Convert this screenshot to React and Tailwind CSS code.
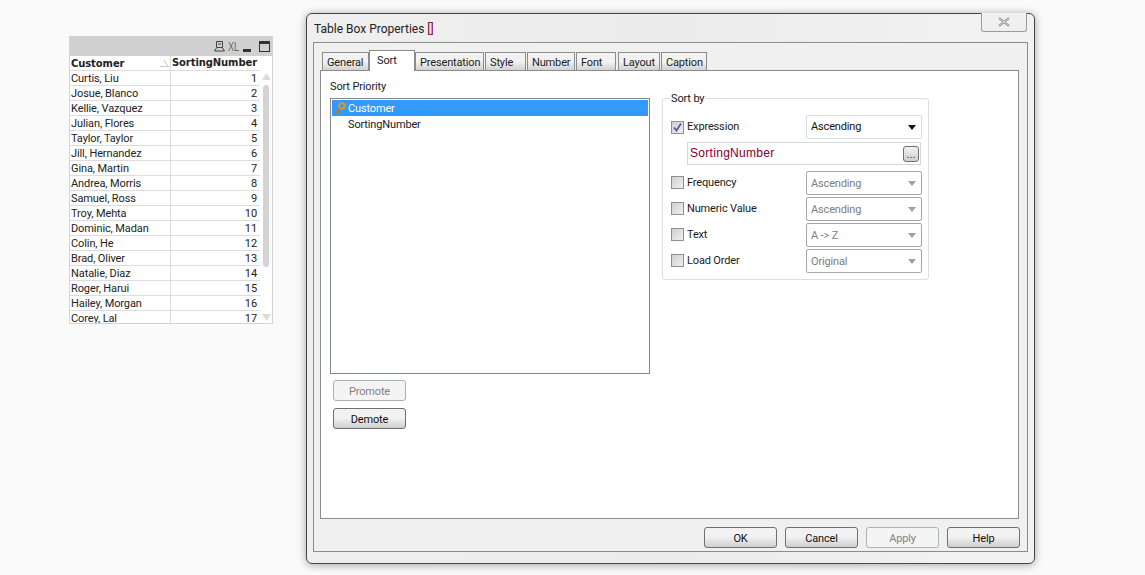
import React from 'react';

const rows = [
  'Curtis, Liu', 'Josue, Blanco', 'Kellie, Vazquez', 'Julian, Flores', 'Taylor, Taylor', 'Jill, Hernandez',
  'Gina, Martin', 'Andrea, Morris', 'Samuel, Ross', 'Troy, Mehta', 'Dominic, Madan', 'Colin, He',
  'Brad, Oliver', 'Natalie, Diaz', 'Roger, Harui', 'Hailey, Morgan', 'Corey, Lal',
];

const tabs = [
  { label: 'General', width: 'w-[47px]', ml: 'ml-0' },
  { label: 'Sort', width: 'w-[46px]', ml: 'ml-0', active: true },
  { label: 'Presentation', width: 'w-[69px]', ml: 'ml-0' },
  { label: 'Style', width: 'w-[41px]', ml: 'ml-px' },
  { label: 'Number', width: 'w-[48px]', ml: 'ml-px' },
  { label: 'Font', width: 'w-[40px]', ml: 'ml-px' },
  { label: 'Layout', width: 'w-[42px]', ml: 'ml-0.5' },
  { label: 'Caption', width: 'w-[46px]', ml: 'ml-px' },
];

const options = [
  { label: 'Frequency', value: 'Ascending' },
  { label: 'Numeric Value', value: 'Ascending' },
  { label: 'Text', value: 'A -> Z' },
  { label: 'Load Order', value: 'Original' },
];

const Checkbox = ({ checked }) => (
  <span className="w-[13px] h-[13px] border border-[#8e8f8f] bg-gradient-to-br from-[#cfcfcf] to-[#f0f0f0] flex items-center justify-center shrink-0">
    {checked && (
      <svg width="11" height="11" viewBox="0 0 11 11">
        <path d="M2 5.5 L4.5 8.5 L9 1.5" fill="none" stroke="#4a5f97" strokeWidth="1.8" />
      </svg>
    )}
  </span>
);

const Caret = ({ color }) => (
  <svg width="8" height="5" viewBox="0 0 8 5" className="shrink-0">
    <path d="M0 0 H8 L4 5 Z" fill={color} />
  </svg>
);

const Button = ({ label, disabled, width = 'w-[73px]' }) => (
  <button
    className={
      disabled
        ? `${width} h-[21px] pt-px rounded-[3px] border border-[#adb2b5] bg-[#f4f4f4] text-[#838383] leading-none`
        : `${width} h-[21px] pt-px rounded-[3px] border border-[#707070] bg-gradient-to-b from-[#f2f2f2] from-45% to-[#cfcfcf] text-[#111] leading-none`
    }
  >
    {label}
  </button>
);

const KeyIcon = () => (
  <svg width="12" height="13" viewBox="0 0 12 13" className="shrink-0">
    <circle cx="8" cy="4" r="2.8" fill="none" stroke="#d8982a" strokeWidth="2" />
    <path d="M6 6 L1.5 11 M3 10 L4.5 11.5" fill="none" stroke="#b87a1c" strokeWidth="1.8" />
  </svg>
);

const TableBox = () => (
  <div className="w-[204px] h-[288px] mt-9 bg-white border-r border-b border-l border-[#d4d4d4] flex flex-col overflow-hidden font-['Roboto',sans-serif] text-[11px] tracking-[-0.1px] text-[#222] shrink-0">
    <div className="h-5 bg-[#d0d0d0] flex items-center justify-end pr-[2px] text-[#444] shrink-0">
      <svg width="11" height="11" viewBox="0 0 11 11" className="mr-[3px]">
        <path d="M2.5 0.5 H8.5 V6.5 H2.5 Z M0.5 10 H10.5 M2.5 7 L0.5 10 M8.5 7 L10.5 10 M4 3 H7" fill="none" stroke="#444" />
      </svg>
      <span className="w-[11px] mr-[4px] flex justify-center text-[13px] leading-none text-[#666] font-['Liberation_Sans',sans-serif] scale-x-[0.7]">XL</span>
      <span className="w-2 h-[3px] bg-[#333] self-end mb-[4px] mr-[8px]" />
      <span className="w-[11px] h-[11px] border border-[#333] border-t-[3px]" />
    </div>
    <div className="flex flex-1 min-h-0">
      <div className="w-[190px]">
        <div className="flex h-[15px] font-['DejaVu_Sans',sans-serif] font-bold text-[10px] tracking-[-0.1px] border-b border-[#dcdcdc] leading-[13px]">
          <div className="w-[101px] pl-px border-r border-[#dcdcdc] flex justify-between items-center pr-px">
            <span>Customer</span>
            <svg width="9" height="8" viewBox="0 0 9 8"><path d="M0 7.5 H9 M8 7 L4 1" fill="none" stroke="#c8c8c8" /></svg>
          </div>
          <div className="flex-1 pl-px">SortingNumber</div>
        </div>
        {rows.map((name, i) => (
          <div key={name} className="flex h-[15px] pt-px border-b border-[#dcdcdc] leading-[14px]">
            <div className="w-[101px] -mt-px pt-px pl-px border-r border-[#dcdcdc] whitespace-nowrap">{name}</div>
            <div className="flex-1 text-right pr-[3px]">{i + 1}</div>
          </div>
        ))}
      </div>
      <div className="flex-1 flex flex-col items-center pt-[17px]">
        <svg width="9" height="7" viewBox="0 0 9 7"><path d="M4.5 0 L9 7 H0 Z" fill="#dcdcdc" /></svg>
        <div className="w-[6px] h-[182px] mt-[5px] bg-[#d4d4d4] rounded-sm" />
        <div className="flex-1" />
        <svg width="9" height="7" viewBox="0 0 9 7" className="mb-[2px]"><path d="M4.5 7 L9 0 H0 Z" fill="#dcdcdc" /></svg>
      </div>
    </div>
  </div>
);

const SortPriority = () => (
  <div className="w-[320px]">
    <div className="h-[15px] leading-[15px]">Sort Priority</div>
    <div className="mt-[4px] h-[276px] border border-[#828790] bg-white p-px">
      <div className="h-4 bg-[#3399ff] text-white flex items-center gap-[2px] pl-[2px]">
        <KeyIcon />
        <span className="pt-[2px]">Customer</span>
      </div>
      <div className="h-4 flex items-center pl-[16px]">
        <span className="pt-[2px]">SortingNumber</span>
      </div>
    </div>
    <div className="flex flex-col gap-[7px] mt-[6px] ml-[3px]">
      <Button label="Promote" disabled />
      <Button label="Demote" />
    </div>
  </div>
);

const SortBy = () => (
  <fieldset className="w-[267px] h-[190px] ml-[12px] mt-[11px] border border-[#d9dfe6] rounded-[3px] pl-[8px] pr-[6px] min-w-0">
    <legend className="px-[1px] -ml-px pt-[2px] leading-[14px]">Sort by</legend>
    <div className="flex items-center justify-between h-6 mt-[9px]">
      <div className="flex items-center gap-[3px]">
        <Checkbox checked />
        <span>Expression</span>
      </div>
      <div className="w-[116px] h-6 border border-[#d9dde2] rounded-[2px] flex items-center justify-between pl-1 pr-[5px] text-[#111]">
        <span>Ascending</span>
        <Caret color="#111" />
      </div>
    </div>
    <div className="ml-[16px] mt-[3px] w-[234px] h-[23px] border border-[#d4d8dd] flex items-center justify-between pl-[2px] pr-px font-['Liberation_Sans',sans-serif] text-[12px] tracking-[0.3px] text-[#80002a]">
      <span className="pb-[2px]">SortingNumber</span>
      <span className="w-4 h-4 border border-[#707070] rounded-[3px] bg-gradient-to-b from-[#f2f2f2] to-[#d0d0d0] flex items-end justify-center text-[#222] text-[10px] leading-[12px]">...</span>
    </div>
    <div className="mt-[6px] flex flex-col gap-[2px]">
      {options.map((o) => (
        <div key={o.label} className="flex items-center justify-between h-6">
          <div className="flex items-center gap-[3px] -mt-[2px]">
            <Checkbox />
            <span className="pt-[2px]">{o.label}</span>
          </div>
          <div className="w-[116px] h-6 border border-[#a6a6a6] rounded-[2px] flex items-center justify-between pl-1 pr-[5px] text-[#7d7d7d]">
            <span className="pt-[2px]">{o.value}</span>
            <Caret color="#a0a0a0" />
          </div>
        </div>
      ))}
    </div>
  </fieldset>
);

const Dialog = () => (
  <div className="w-[729px] h-[551px] mt-[13px] ml-[33px] shrink-0 rounded-[6px] border border-[#444] bg-gradient-to-r from-[#efefef] via-[#ececec] to-[#f2f2f2] shadow-[0_1px_8px_rgba(0,0,0,0.35)] px-[6px] flex flex-col font-['Roboto',sans-serif] text-[11px] tracking-[-0.15px] text-[#1a1a1a]">
    <div className="h-7 shrink-0 flex items-start justify-between">
      <div className="mt-[5px] ml-[1px] text-[12px] leading-[20px] tracking-normal text-[#222]">
        Table Box Properties <span className="text-[#80002a]">[]</span>
      </div>
      <div className="w-[46px] h-[19px] -mt-px mr-[1px] border border-t-0 border-[#9a9a9a] rounded-b-[3px] bg-[#f0f0f0] flex items-center justify-center">
        <svg width="14" height="10" viewBox="0 0 14 10">
          <path d="M2 1 L12 9 M12 1 L2 9" fill="none" stroke="#7d7d7d" strokeWidth="2.2" />
          <path d="M2 1 L12 9 M12 1 L2 9" fill="none" stroke="#f6f6f6" strokeWidth="0.8" />
        </svg>
      </div>
    </div>
    <div className="w-[715px] h-[510px] border border-[#8c8c8c] bg-[#f0f0f0] px-[6px] pt-[7px] flex flex-col">
      <div className="h-[20px] flex items-end pl-[2px] relative z-10">
        {tabs.map((t) => (
          <div
            key={t.label}
            className={
              t.active
                ? `${t.width} ${t.ml} h-[21px] -mb-px bg-white border border-b-0 border-[#8c8c8c] pl-[7px] pt-[2px] leading-[15px]`
                : `${t.width} ${t.ml} h-[18px] border border-b-0 border-[#8c8c8c] bg-gradient-to-b from-[#f2f2f2] from-50% to-[#d2d2d2] pl-[4px] leading-[19px] whitespace-nowrap`
            }
          >
            {t.label}
          </div>
        ))}
      </div>
      <div className="w-[699px] h-[449px] border border-[#8c8c8c] bg-white pl-[9px] pt-[8px] flex items-start">
        <SortPriority />
        <SortBy />
      </div>
      <div className="flex justify-end gap-[8px] mt-[8px] pr-[1px]">
        <Button label="OK" />
        <Button label="Cancel" />
        <Button label="Apply" disabled />
        <Button label="Help" />
      </div>
    </div>
  </div>
);

export default function App() {
  return (
    <div className="w-[1145px] h-[575px] bg-[#fafafa] flex items-start pl-[69px] overflow-hidden">
      <TableBox />
      <Dialog />
    </div>
  );
}
